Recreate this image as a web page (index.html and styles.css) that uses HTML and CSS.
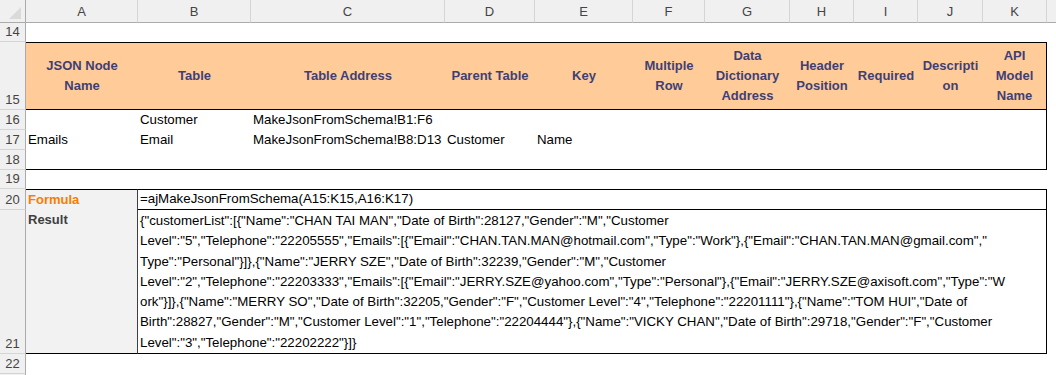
FILE: index.html
```html
<!DOCTYPE html>
<html lang="en">
<head>
    <meta charset="UTF-8">
    <title>MakeJsonFromSchema</title>
    <link rel="stylesheet" href="styles.css">
</head>
<body>
    <div class="sheet">
        <!-- column headers -->
        <div class="ch corner">
            <svg width="25" height="22" viewBox="0 0 25 22"><polygon points="21,7 21,19 9,19" fill="#dadada"/></svg>
        </div>
        <div class="ch">A</div>
        <div class="ch">B</div>
        <div class="ch">C</div>
        <div class="ch">D</div>
        <div class="ch">E</div>
        <div class="ch">F</div>
        <div class="ch">G</div>
        <div class="ch">H</div>
        <div class="ch">I</div>
        <div class="ch">J</div>
        <div class="ch">K</div>
        <div class="ch filler"></div>

        <!-- 14 -->
        <div class="rh">14</div>
        <div class="cell span-12"></div>

        <!-- 15 -->
        <div class="rh">15</div>
        <div class="cell hdr"><span>JSON Node<br>Name</span></div>
        <div class="cell hdr"><span>Table</span></div>
        <div class="cell hdr"><span>Table Address</span></div>
        <div class="cell hdr"><span>Parent Table</span></div>
        <div class="cell hdr"><span>Key</span></div>
        <div class="cell hdr"><span>Multiple<br>Row</span></div>
        <div class="cell hdr"><span>Data<br>Dictionary<br>Address</span></div>
        <div class="cell hdr"><span>Header<br>Position</span></div>
        <div class="cell hdr"><span>Required</span></div>
        <div class="cell hdr"><span>Descripti<br>on</span></div>
        <div class="cell hdr edge"><span>API<br>Model<br>Name</span></div>
        <div class="cell"></div>

        <!-- 16 -->
        <div class="rh">16</div>
        <div class="cell"></div>
        <div class="cell">Customer</div>
        <div class="cell">MakeJsonFromSchema!B1:F6</div>
        <div class="cell span-8 edge"></div>
        <div class="cell"></div>

        <!-- 17 -->
        <div class="rh">17</div>
        <div class="cell">Emails</div>
        <div class="cell">Email</div>
        <div class="cell">MakeJsonFromSchema!B8:D13</div>
        <div class="cell">Customer</div>
        <div class="cell">Name</div>
        <div class="cell span-6 edge"></div>
        <div class="cell"></div>

        <!-- 18 -->
        <div class="rh">18</div>
        <div class="cell span-11 edge bottom"></div>
        <div class="cell"></div>

        <!-- 19 -->
        <div class="rh">19</div>
        <div class="cell span-12"></div>

        <!-- 20 -->
        <div class="rh">20</div>
        <div class="cell label calc top">Formula</div>
        <div class="cell span-10 edge top bottom">=ajMakeJsonFromSchema(A15:K15,A16:K17)</div>
        <div class="cell"></div>

        <!-- 21 -->
        <div class="rh">21</div>
        <div class="cell label output bottom">Result</div>
        <div class="cell span-10 edge bottom result">
            <span>{"customerList":[{"Name":"CHAN TAI MAN","Date of Birth":28127,"Gender":"M","Customer</span>
            <span>Level":"5","Telephone":"22205555","Emails":[{"Email":"CHAN.TAN.MAN@hotmail.com","Type":"Work"},{"Email":"CHAN.TAN.MAN@gmail.com","</span>
            <span>Type":"Personal"}]},{"Name":"JERRY SZE","Date of Birth":32239,"Gender":"M","Customer</span>
            <span>Level":"2","Telephone":"22203333","Emails":[{"Email":"JERRY.SZE@yahoo.com","Type":"Personal"},{"Email":"JERRY.SZE@axisoft.com","Type":"W</span>
            <span>ork"}]},{"Name":"MERRY SO","Date of Birth":32205,"Gender":"F","Customer Level":"4","Telephone":"22201111"},{"Name":"TOM HUI","Date of</span>
            <span>Birth":28827,"Gender":"M","Customer Level":"1","Telephone":"22204444"},{"Name":"VICKY CHAN","Date of Birth":29718,"Gender":"F","Customer</span>
            <span>Level":"3","Telephone":"22202222"}]}</span>
        </div>
        <div class="cell"></div>

        <!-- 22 -->
        <div class="rh">22</div>
        <div class="cell span-12"></div>

        <!-- 23, only its top edge shows -->
        <div class="rh"></div>
        <div class="cell span-12"></div>
    </div>
</body>
</html>
```
FILE: styles.css
```css
body {
    margin: 0;
    overflow: hidden;
    background-color: #fff;
    font-family: "Liberation Sans", Arial, sans-serif;
    font-size: 13.3px;
    color: #000;
}
.sheet {
    display: grid;
    width: 1056px;
    height: 375px;
    grid-template-columns: 26px 112px 113px 194px 90px 98px 72px 85px 64px 64px 65px 64px 1fr;
    grid-template-rows: 23px 19px 68px 20px 20px 20px 19px 21px 144px 20px 20px;
    overflow: hidden;
}

/* headers */
.ch {
    display: flex;
    align-items: center;
    justify-content: center;
    box-sizing: border-box;
    background-color: #f0f0f0;
    border-right: 1px solid #d5d5d5;
    border-bottom: 1px solid #ababab;
    color: #444;
    font-size: 13px;
}
.ch.corner {
    border-right-color: #ababab;
}
.ch.filler {
    border-right: none;
}
.rh {
    display: flex;
    align-items: flex-end;
    justify-content: center;
    box-sizing: border-box;
    background-color: #f0f0f0;
    border-right: 1px solid #ababab;
    border-bottom: 1px solid #d5d5d5;
    color: #444;
    font-size: 13px;
    line-height: 19px;
}

/* cells */
.cell {
    display: flex;
    align-items: flex-end;
    box-sizing: border-box;
    min-width: 0;
    padding: 0 2px;
    line-height: 20px;
    white-space: nowrap;
}
.span-6 { grid-column: span 6; }
.span-8 { grid-column: span 8; }
.span-10 { grid-column: span 10; }
.span-11 { grid-column: span 11; }
.span-12 { grid-column: span 12; }

.edge { border-right: 1px solid #000; }
.top { border-top: 1px solid #000; }
.bottom { border-bottom: 1px solid #000; }

.hdr {
    align-items: center;
    justify-content: center;
    text-align: center;
    background-color: #ffcc99;
    border-top: 1px solid #000;
    border-bottom: 1px solid #000;
    color: #3f3f76;
    font-weight: bold;
    font-size: 13px;
}

.label {
    background-color: #f2f2f2;
    border-right: 1px solid #3f3f3f;
    font-weight: bold;
    font-size: 13px;
}
.calc {
    color: #fa7d00;
}
.output {
    align-items: flex-start;
    color: #3f3f3f;
}

.result {
    flex-direction: column;
    align-items: flex-start;
    justify-content: flex-start;
    padding-top: 1px;
    line-height: 20.3px;
}
```
